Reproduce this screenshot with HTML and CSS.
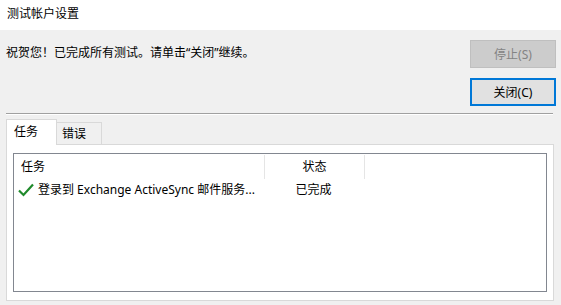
FILE: index.html
```html
<!DOCTYPE html>
<html lang="zh-CN">
  <head>
    <meta charset="UTF-8" />
    <meta name="viewport" content="width=device-width, initial-scale=1.0" />
    <title>测试帐户设置</title>
    <link rel="stylesheet" href="styles.css">
  </head>
  <body>
    <div class="title-bar">测试帐户设置</div>

    <div class="dialog">
      <div class="top-row">
        <div class="message">祝贺您！已完成所有测试。请单击“关闭”继续。</div>
        <div class="buttons">
          <button type="button" class="btn" disabled>停止(S)</button>
          <button type="button" class="btn btn-default">关闭(C)</button>
        </div>
      </div>

      <div class="separator"></div>

      <div class="tabs">
        <div class="tab active">任务</div>
        <div class="tab">错误</div>
      </div>

      <div class="tab-panel">
        <div class="list-box">
          <div class="list-header">
            <div class="col col-task">任务</div>
            <div class="col col-status">状态</div>
          </div>
          <div class="list-row">
            <div class="col col-task">
              <svg class="check" width="16" height="14" viewBox="0 0 16 14">
                <path d="M1 7.5 L5.5 12 L15 1.5" fill="none" stroke="#1f8a2b" stroke-width="2.2" stroke-linejoin="miter" />
              </svg>
              <span>登录到 Exchange ActiveSync 邮件服务...</span>
            </div>
            <div class="col col-status">已完成</div>
          </div>
        </div>
      </div>
    </div>
  </body>
</html>
```

FILE: styles.css
```css
/* Test account settings dialog */
body {
  margin: 0;
  font-family: "Noto Sans", "Noto Sans CJK SC", sans-serif;
  font-size: 12px;
  color: #000;
  background-color: #f0f0f0;
  height: 305px;
  overflow: hidden;
}

.title-bar {
  background-color: #fff;
  height: 30px;
  line-height: 28px;
  padding-left: 7px;
}

.dialog {
  padding: 10px 6px 0 6px;
}

.top-row {
  display: flex;
  justify-content: space-between;
}

.message {
  padding-top: 4px;
  line-height: 18px;
}

.buttons {
  display: flex;
  flex-direction: column;
  gap: 10px;
  margin-right: -1px;
}

.btn {
  width: 86px;
  height: 28px;
  font-family: inherit;
  font-size: 12px;
  background-color: #e1e1e1;
  border: 1px solid #adadad;
  padding: 0;
  color: #000;
}

.btn:disabled {
  background-color: #cccccc;
  border-color: #bfbfbf;
  color: #838383;
}

.btn-default {
  border: 2px solid #0078d7;
}

.separator {
  margin-top: 7px;
  height: 1px;
  background-color: #a0a0a0;
  border-bottom: 1px solid #fff;
  margin-right: 2px;
}

.tabs {
  display: flex;
  align-items: flex-end;
  margin-top: 4px;
  position: relative;
  z-index: 1;
}

.tab {
  height: 21px;
  line-height: 21px;
  padding: 0 15px 0 5px;
  border: 1px solid #d9d9d9;
  border-bottom: none;
  background-color: #f0f0f0;
  margin-left: -1px;
}

.tab.active {
  height: 25px;
  line-height: 23px;
  padding: 0 18px 0 7px;
  background-color: #fff;
  margin-left: 0;
  margin-bottom: -1px;
  position: relative;
  z-index: 2;
}

.tab.active + .tab {
  margin-left: 0;
  border-left: none;
}

.tab-panel {
  background-color: #fff;
  border: 1px solid #d9d9d9;
  height: 147px;
  margin-right: 1px;
  padding: 8px 6px 0 6px;
}

.list-box {
  border: 1px solid #828790;
  height: 137px;
}

.list-header,
.list-row {
  display: flex;
}

.list-header .col {
  height: 24px;
  line-height: 24px;
  margin-top: 1px;
  border-right: 1px solid #e5e5e5;
}

.list-row .col {
  height: 22px;
  line-height: 22px;
}

.col-task {
  width: 243px;
  padding-left: 7px;
  display: flex;
  align-items: center;
}

.col-status {
  width: 99px;
  text-align: center;
}

.list-row .col-task {
  padding-left: 4px;
  width: 246px;
}

.check {
  margin-right: 4px;
}
```
